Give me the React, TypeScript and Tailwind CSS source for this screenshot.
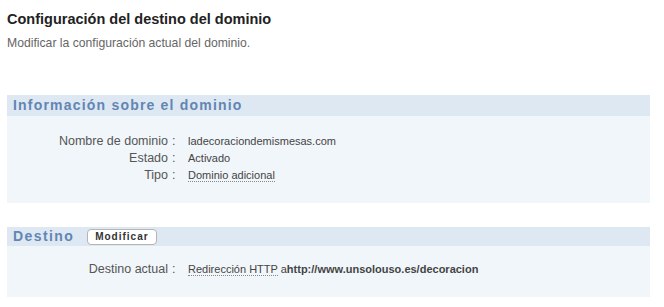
export default function App() {
  const font = { fontFamily: '"Liberation Sans", Arial, sans-serif' }

  const infoRows = [
    { label: 'Nombre de dominio', value: 'ladecoraciondemismesas.com', dotted: false },
    { label: 'Estado', value: 'Activado', dotted: false },
    { label: 'Tipo', value: 'Dominio adicional', dotted: true },
  ]

  return (
    <div className="w-[664px] h-[307px] bg-white text-[#333]" style={font}>
      <div className="pl-[7px] pr-[14px] pt-[11px]">
        {/* Page heading */}
        <h1 className="text-[14.5px] font-bold leading-[17px] text-[#222]">
          Configuración del destino del dominio
        </h1>
        <p className="mt-[8px] text-[12.2px] leading-[15px] text-[#666]">
          Modificar la configuración actual del dominio.
        </p>

        {/* Información sobre el dominio */}
        <section className="mt-[44px]">
          <div className="h-[21px] bg-[#dde8f2] px-[6px] flex items-center">
            <h2 className="text-[14px] font-bold tracking-[1.2px] text-[#6285b3]">
              Información sobre el dominio
            </h2>
          </div>
          <div className="h-[87px] bg-[#f1f6fa] pt-[17px]">
            {infoRows.map((row) => (
              <div key={row.label} className="flex items-center h-[17px]">
                <span className="w-[161px] text-right text-[12.5px] text-[#555]">{row.label}</span>
                <span className="w-[20px] pl-[4px] text-[12.5px] text-[#555]">:</span>
                <span
                  className={
                    'text-[11px] text-[#444] ' +
                    (row.dotted ? 'border-b border-dotted border-[#888] leading-[12px]' : '')
                  }
                >
                  {row.value}
                </span>
              </div>
            ))}
          </div>
        </section>

        {/* Destino */}
        <section className="mt-[24px]">
          <div className="h-[19px] bg-[#dde8f2] px-[6px] flex items-center gap-[13px]">
            <h2 className="text-[14px] font-bold tracking-[1.4px] text-[#6285b3]">Destino</h2>
            <button
              type="button"
              className="h-[16px] px-[7px] mt-[1px] bg-white border border-[#b5b5b5] rounded-[4px] text-[10px] font-bold tracking-[1px] text-[#333] leading-[14px]"
            >
              Modificar
            </button>
          </div>
          <div className="h-[51px] bg-[#f1f6fa] pt-[16px]">
            <div className="flex items-center h-[15px]">
              <span className="w-[161px] text-right text-[12.5px] text-[#555]">Destino actual</span>
              <span className="w-[20px] pl-[4px] text-[12.5px] text-[#555]">:</span>
              <span className="text-[11px] text-[#444]">
                <span className="border-b border-dotted border-[#888]">Redirección HTTP</span> a
                <span className="font-bold">http://www.unsolouso.es/decoracion</span>
              </span>
            </div>
          </div>
        </section>
      </div>
    </div>
  )
}
